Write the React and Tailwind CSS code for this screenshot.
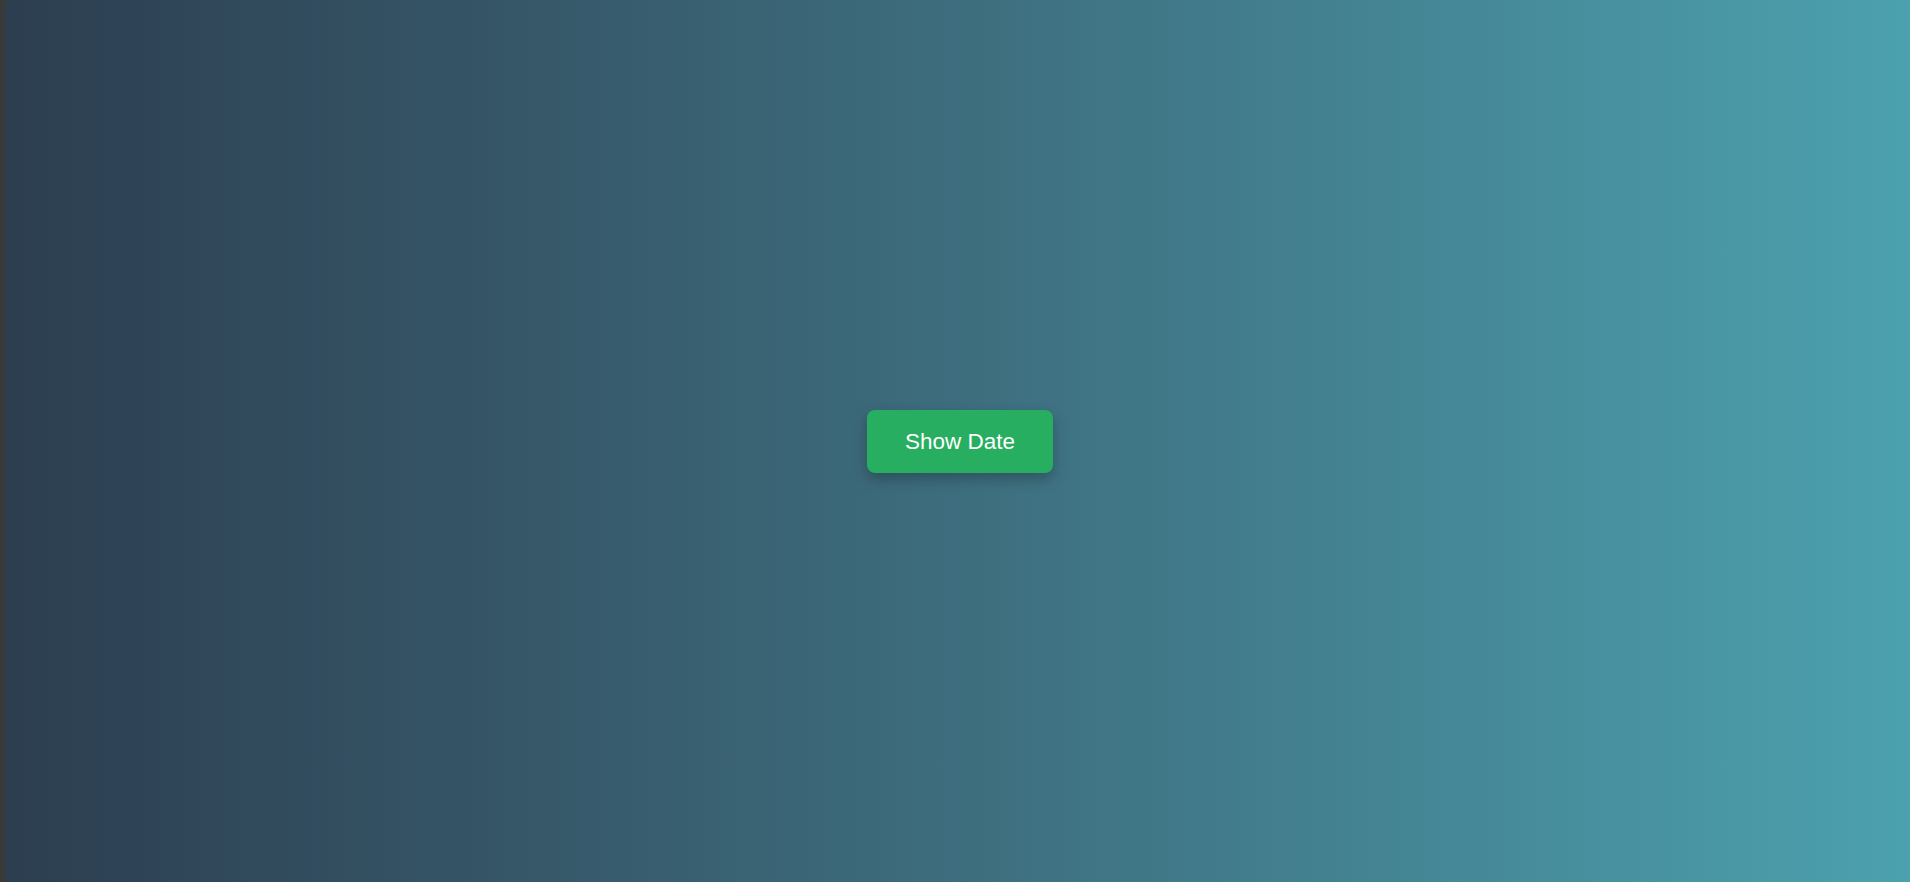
export default function App() {
  return (
    <div className="flex h-[882px] w-full bg-[#3a3a3a]" style={{ fontFamily: '"Liberation Sans", Arial, sans-serif' }}>
      <div className="w-[5px] shrink-0" />
      <main className="flex flex-1 items-center justify-center rounded-l-[6px] bg-gradient-to-r from-[#2c3e50] to-[#4ca1af]">
        <button className="ml-[5px] mt-[1px] h-[63px] w-[186px] rounded-[8px] bg-[#27ae60] text-[22.5px] text-white shadow-[0_6px_14px_rgba(0,0,0,0.25)]">
          Show Date
        </button>
      </main>
    </div>
  );
}
